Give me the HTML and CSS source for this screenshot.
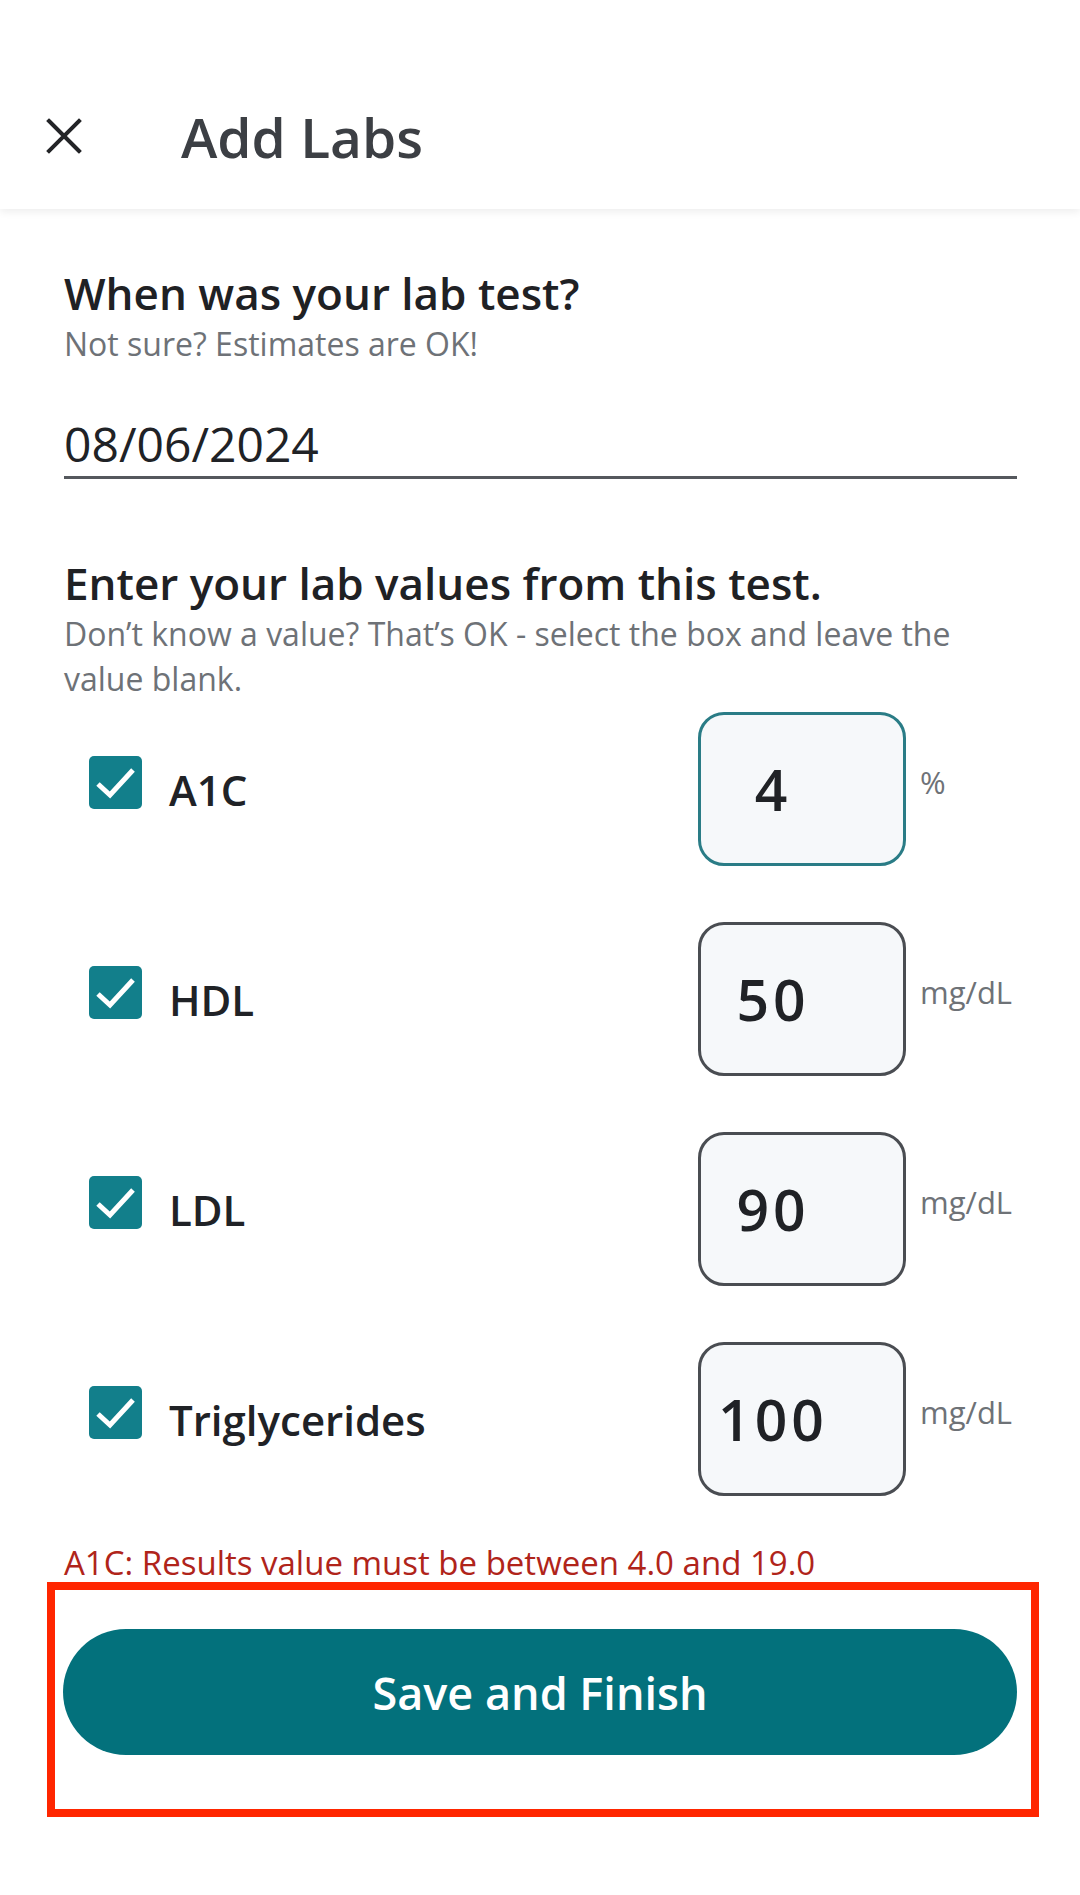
FILE: index.html
```html
<!DOCTYPE html>
<html lang="en">
<head>
<meta charset="utf-8">
<title>Add Labs</title>
<link rel="stylesheet" href="styles.css">
</head>
<body>
<header class="topbar">
  <button class="close" aria-label="Close">
    <svg width="36" height="36" viewBox="0 0 36 36"><path d="M3 3 L33 33 M33 3 L3 33" stroke="#232427" stroke-width="4" stroke-linecap="square" fill="none"/></svg>
  </button>
  <h1 class="title">Add Labs</h1>
</header>

<main class="content">
  <section class="block date-block">
    <h2 class="heading">When was your lab test?</h2>
    <p class="sub">Not sure? Estimates are OK!</p>
    <div class="date-field">08/06/2024</div>
  </section>

  <section class="block values-block">
    <h2 class="heading">Enter your lab values from this test.</h2>
    <p class="sub wrap">Don’t know a value? That’s OK - select the box and leave the value blank.</p>

    <div class="rows">
      <div class="row">
        <span class="check"><svg width="53" height="53" viewBox="0 0 53 53"><path d="M9 28 L21 39 L44 14" stroke="#fff" stroke-width="5" fill="none"/></svg></span>
        <span class="label">A1C</span>
        <span class="value-box active">4</span>
        <span class="unit">%</span>
      </div>
      <div class="row">
        <span class="check"><svg width="53" height="53" viewBox="0 0 53 53"><path d="M9 28 L21 39 L44 14" stroke="#fff" stroke-width="5" fill="none"/></svg></span>
        <span class="label">HDL</span>
        <span class="value-box">50</span>
        <span class="unit">mg/dL</span>
      </div>
      <div class="row">
        <span class="check"><svg width="53" height="53" viewBox="0 0 53 53"><path d="M9 28 L21 39 L44 14" stroke="#fff" stroke-width="5" fill="none"/></svg></span>
        <span class="label">LDL</span>
        <span class="value-box">90</span>
        <span class="unit">mg/dL</span>
      </div>
      <div class="row">
        <span class="check"><svg width="53" height="53" viewBox="0 0 53 53"><path d="M9 28 L21 39 L44 14" stroke="#fff" stroke-width="5" fill="none"/></svg></span>
        <span class="label">Triglycerides</span>
        <span class="value-box">100</span>
        <span class="unit">mg/dL</span>
      </div>
    </div>

    <p class="error">A1C: Results value must be between 4.0 and 19.0</p>
  </section>

  <div class="highlight">
    <button class="primary">Save and Finish</button>
  </div>
</main>
</body>
</html>
```

FILE: styles.css
```css
* { box-sizing: border-box; }
html, body {
  margin: 0;
  padding: 0;
  background: #ffffff;
}
body {
  width: 1080px;
  min-height: 1895px;
  font-family: "Open Sans", Roboto, "Liberation Sans", sans-serif;
  color: #202226;
}

.topbar {
  height: 209px;
  display: flex;
  align-items: center;
  padding: 63px 0 0 46px;
  background: #fff;
  box-shadow: 0 3px 8px rgba(0, 0, 0, 0.07);
  position: relative;
  z-index: 1;
}
.close {
  width: 36px;
  height: 36px;
  padding: 0;
  border: 0;
  background: none;
  display: flex;
}
.title {
  margin: 0 0 0 99px;
  font-size: 55px;
  font-weight: 600;
  color: #3c3f44;
}

.content {
  padding: 0 63px 0 64px;
}

.heading {
  margin: 0;
  font-size: 44px;
  font-weight: 600;
  line-height: 56px;
  color: #1f2124;
}
.sub {
  margin: 0;
  font-size: 32px;
  line-height: 45px;
  color: #6e7277;
}

.date-block {
  padding-top: 56px;
}
.date-field {
  margin-top: 48px;
  font-size: 48px;
  line-height: 60px;
  color: #202226;
  padding-bottom: 2px;
  border-bottom: 3px solid #55585d;
}

.values-block {
  padding-top: 76px;
}

.rows {
  margin-top: 11px;
  display: flex;
  flex-direction: column;
  gap: 56px;
}
.row {
  display: flex;
  align-items: center;
  height: 154px;
}
.check {
  width: 53px;
  height: 53px;
  margin: 0 0 14px 25px;
  border-radius: 5px;
  background: #127f8b;
  display: flex;
  flex-shrink: 0;
}
.label {
  margin-left: 27px;
  font-size: 42px;
  font-weight: 600;
  color: #202226;
  flex: 1;
}
.value-box {
  width: 208px;
  height: 154px;
  border: 3px solid #4a4d52;
  border-radius: 26px;
  background: #f6f8fa;
  display: flex;
  align-items: center;
  justify-content: center;
  padding-right: 58px;
  font-size: 57px;
  font-weight: 600;
  letter-spacing: 4px;
  color: #202226;
}
.value-box.active {
  border-color: #2a7c86;
}
.unit {
  width: 111px;
  padding-left: 14px;
  margin-bottom: 14px;
  font-size: 31px;
  color: #6e7277;
}

.error {
  margin: 47px 0 0;
  font-size: 33px;
  line-height: 40px;
  color: #b0241a;
}

.highlight {
  margin: -1px -22px 0 -17px;
  border: 8px solid #ff2600;
  padding: 39px 14px 54px 8px;
}
.primary {
  display: block;
  width: 100%;
  height: 126px;
  border: 0;
  border-radius: 63px;
  background: #03717c;
  color: #ffffff;
  font-family: "Open Sans", Roboto, "Liberation Sans", sans-serif;
  font-size: 45px;
  font-weight: 600;
}
```
